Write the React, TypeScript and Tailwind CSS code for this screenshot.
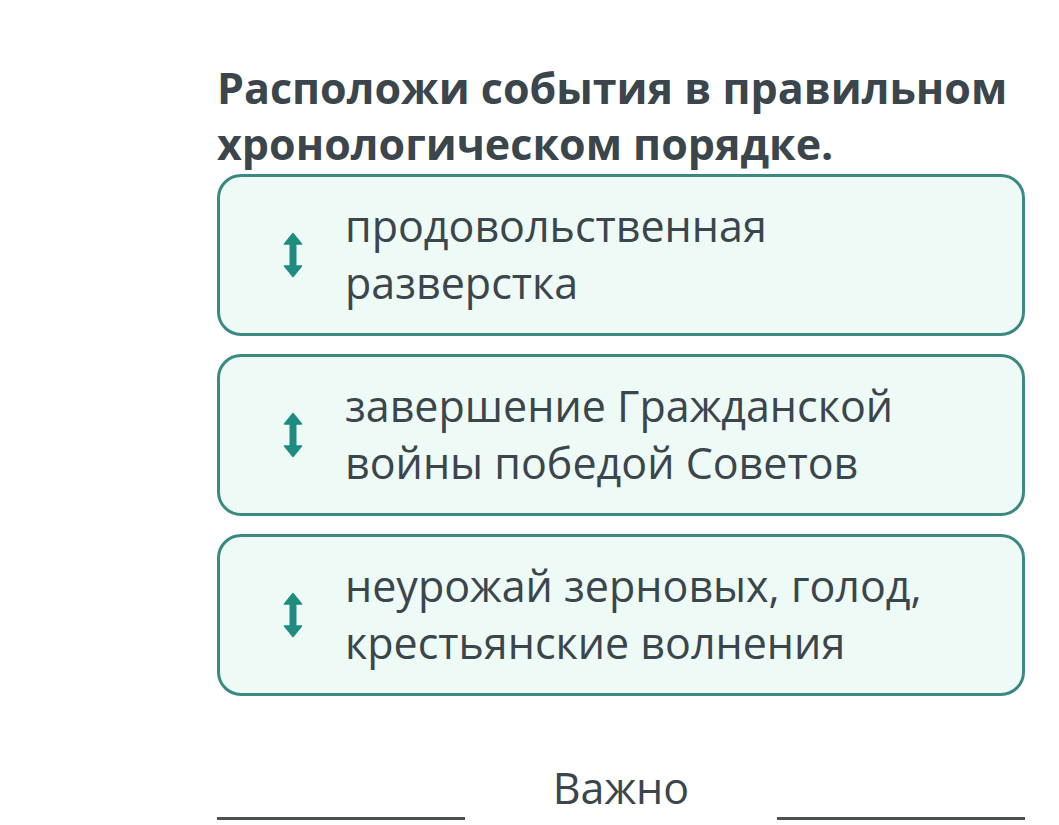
import React from "react";

const items = [
  ["продовольственная", "разверстка"],
  ["завершение Гражданской", "войны победой Советов"],
  ["неурожай зерновых, голод,", "крестьянские волнения"],
];

function UpDown() {
  return (
    <svg width="20" height="46" viewBox="0 0 20 46" className="shrink-0">
      <g fill="#1e8c80" stroke="#1e8c80" strokeWidth="1.5" strokeLinejoin="round">
        <path d="M10 1.5 L18.5 12 L1.5 12 Z" />
        <rect x="6.5" y="10" width="7" height="26" strokeWidth="0" />
        <path d="M10 44.5 L18.5 34 L1.5 34 Z" />
      </g>
    </svg>
  );
}

export default function App() {
  return (
    <div
      className="w-[1059px] h-[825px] overflow-hidden bg-white text-[#3b454c]"
      style={{ fontFamily: '"Open Sans", "Noto Sans", sans-serif' }}
    >
      <div className="ml-[217px] w-[808px] pt-[60px]">
        <h1 className="text-[43px] leading-[56px] font-bold text-[#3b454c]">
          Расположи события в правильном хронологическом порядке.
        </h1>
        <div className="mt-[2px] flex flex-col gap-[18px]">
          {items.map((lines, i) => (
            <div
              key={i}
              className="h-[162px] rounded-[24px] border-[3px] border-[#3b8981] bg-[#eefaf5] flex items-center pl-[63px]"
            >
              <UpDown />
              <div className="ml-[42px] text-[43px] leading-[57px] pb-[2px]">
                <div>{lines[0]}</div>
                <div>{lines[1]}</div>
              </div>
            </div>
          ))}
        </div>
        <div className="mt-[66px] flex items-end justify-between">
          <div className="w-[248px] h-[3px] bg-[#4b5257] mb-[2px]" />
          <div className="text-[43px] leading-[52px] text-[#3b454c] mb-[8px]">Важно</div>
          <div className="w-[248px] h-[3px] bg-[#4b5257] mb-[2px]" />
        </div>
      </div>
    </div>
  );
}
